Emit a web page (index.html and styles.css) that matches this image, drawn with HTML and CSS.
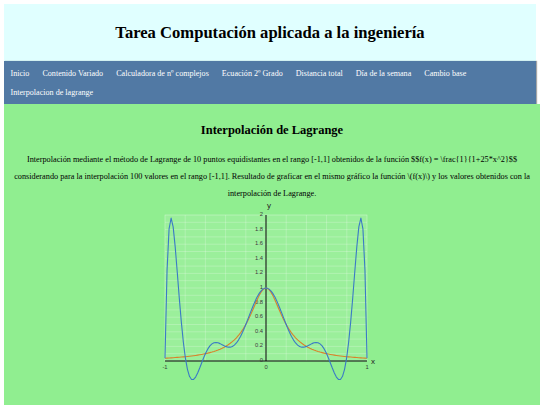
FILE: index.html
```html
<!DOCTYPE html>
<html lang="es">
<head>
<meta charset="utf-8">
<title>Interpolación de Lagrange</title>
<link rel="stylesheet" href="styles.css">
</head>
<body class="page">
<header class="site-header">
  <h1 class="site-title">Tarea Computación aplicada a la ingeniería</h1>
</header>
<nav class="main-nav">
  <a class="nav-link" href="#">Inicio</a>
  <a class="nav-link" href="#">Contenido Variado</a>
  <a class="nav-link" href="#">Calculadora de nº complejos</a>
  <a class="nav-link" href="#">Ecuación 2º Grado</a>
  <a class="nav-link" href="#">Distancia total</a>
  <a class="nav-link" href="#">Día de la semana</a>
  <a class="nav-link" href="#">Cambio base</a>
  <a class="nav-link" href="#">Interpolacion de lagrange</a>
</nav>
<main class="content">
  <h2 class="section-title">Interpolación de Lagrange</h2>
  <p class="intro">Interpolación mediante el método de Lagrange de 10 puntos equidistantes en el rango [-1,1] obtenidos de la función $$f(x) = \frac{1}{1+25*x^2}$$<br>considerando para la interpolación 100 valores en el rango [-1,1]. Resultado de graficar en el mismo gráfico la función \(f(x)\) y los valores obtenidos con la interpolación de Lagrange.</p>
  <svg class="chart" viewBox="0 0 248 190" xmlns="http://www.w3.org/2000/svg">
    <g class="grid"></g>
    <g class="axes"></g>
    <g class="labels"></g>
    <polyline class="curve curve-f" points=""></polyline>
    <polyline class="curve curve-p" points=""></polyline>
  </svg>
</main>
<script src="script.js"></script>
</body>
</html>
```

FILE: styles.css
```css
.page {
  margin: 4px 0 0 4px;
  font-family: "Liberation Serif", "DejaVu Serif", "Times New Roman", Times, serif;
  display: flex;
  flex-direction: column;
  height: calc(100vh - 4px);
  overflow: hidden;
}

.site-header {
  background: #e0ffff;
  margin-right: 4px;
  padding: 20px 0 19px;
  text-align: center;
}

.site-title {
  margin: 0;
  font-size: 16.6px;
  line-height: 18px;
  font-weight: bold;
}

.main-nav {
  background: #5179a4;
  margin-right: 4px;
  padding: 2.5px 0;
  display: flex;
  flex-wrap: wrap;
  box-shadow: 1px 0 1px rgba(0, 0, 0, 0.35);
}

.nav-link {
  color: #ffffff;
  text-decoration: none;
  font-size: 8.1px;
  line-height: 19px;
  padding: 0 6.5px;
}

.content {
  flex: 1;
  background: #90ee90;
  padding-top: 19px;
  text-align: center;
}

.section-title {
  margin: 0;
  font-size: 12.5px;
  line-height: 14px;
  font-weight: bold;
}

.intro {
  margin: 14px 0 0;
  font-size: 8.25px;
  line-height: 17px;
}

.chart {
  display: block;
  margin: 0 auto;
  width: 248px;
  height: 190px;
}

.grid-line {
  stroke: rgba(255, 255, 255, 0.38);
  stroke-width: 0.6;
}

.plot-bg {
  fill: rgba(255, 255, 255, 0.1);
  stroke: rgba(255, 255, 255, 0.5);
  stroke-width: 0.6;
}

.axis-line {
  stroke: #000000;
  stroke-width: 1;
}

.tick-label {
  font-family: "Liberation Sans", Arial, sans-serif;
  font-size: 5.8px;
  fill: #3a3a3a;
}

.axis-name {
  font-family: "Liberation Sans", Arial, sans-serif;
  font-size: 8px;
  fill: #222222;
}

.curve {
  fill: none;
  stroke-width: 1.1;
  stroke-linejoin: round;
}

.curve-f {
  stroke: #d9822b;
}

.curve-p {
  stroke: #3a7ac6;
}
```

FILE: script.js
```js
(function () {
  var NS = "http://www.w3.org/2000/svg";
  var svg = document.querySelector(".chart");
  var X0 = 17, X1 = 219, Y0 = 159, SY = 73;

  function px(x) { return X0 + (x + 1) * (X1 - X0) / 2; }
  function py(y) { return Y0 - y * SY; }

  function el(name, attrs, parent, text) {
    var e = document.createElementNS(NS, name);
    for (var k in attrs) e.setAttribute(k, attrs[k]);
    if (text !== undefined) e.textContent = text;
    parent.appendChild(e);
    return e;
  }

  var grid = svg.querySelector(".grid");
  el("rect", { "class": "plot-bg", x: px(-1), y: py(2), width: px(1) - px(-1), height: py(0) - py(2) }, grid);
  for (var i = 1; i < 10; i++) {
    var gx = px(-1 + 0.2 * i);
    el("line", { "class": "grid-line", x1: gx, y1: py(2), x2: gx, y2: py(0) }, grid);
  }
  for (var j = 1; j < 20; j++) {
    var gy = py(0.1 * j);
    el("line", { "class": "grid-line", x1: px(-1), y1: gy, x2: px(1), y2: gy }, grid);
  }

  var axes = svg.querySelector(".axes");
  el("line", { "class": "axis-line", x1: px(-1), y1: py(0), x2: px(1), y2: py(0) }, axes);
  el("line", { "class": "axis-line", x1: px(0), y1: py(2), x2: px(0), y2: py(0) }, axes);

  var labels = svg.querySelector(".labels");
  for (var t = 0; t <= 10; t++) {
    var v = Math.round(t * 2) / 10;
    el("text", { "class": "tick-label", x: px(0) - 3, y: py(v) + 1, "text-anchor": "end" }, labels, String(v));
  }
  [-1, 0, 1].forEach(function (v) {
    el("text", { "class": "tick-label", x: px(v), y: py(0) + 8, "text-anchor": "middle" }, labels, String(v));
  });
  el("text", { "class": "axis-name", x: px(1) + 4, y: py(0) + 3 }, labels, "x");
  el("text", { "class": "axis-name", x: px(0) + 1, y: 6 }, labels, "y");

  function f(x) { return 1 / (1 + 25 * x * x); }
  var nodes = [];
  for (var n = 0; n <= 10; n++) nodes.push(-1 + 0.2 * n);
  function lagrange(x) {
    var s = 0;
    for (var a = 0; a < nodes.length; a++) {
      var l = 1;
      for (var b = 0; b < nodes.length; b++) {
        if (a !== b) l *= (x - nodes[b]) / (nodes[a] - nodes[b]);
      }
      s += f(nodes[a]) * l;
    }
    return s;
  }

  var ptsF = [], ptsP = [];
  for (var k = 0; k < 100; k++) {
    var x = -1 + 2 * k / 99;
    ptsF.push(px(x).toFixed(2) + "," + py(f(x)).toFixed(2));
    ptsP.push(px(x).toFixed(2) + "," + py(lagrange(x)).toFixed(2));
  }
  svg.querySelector(".curve-f").setAttribute("points", ptsF.join(" "));
  svg.querySelector(".curve-p").setAttribute("points", ptsP.join(" "));
})();
```
